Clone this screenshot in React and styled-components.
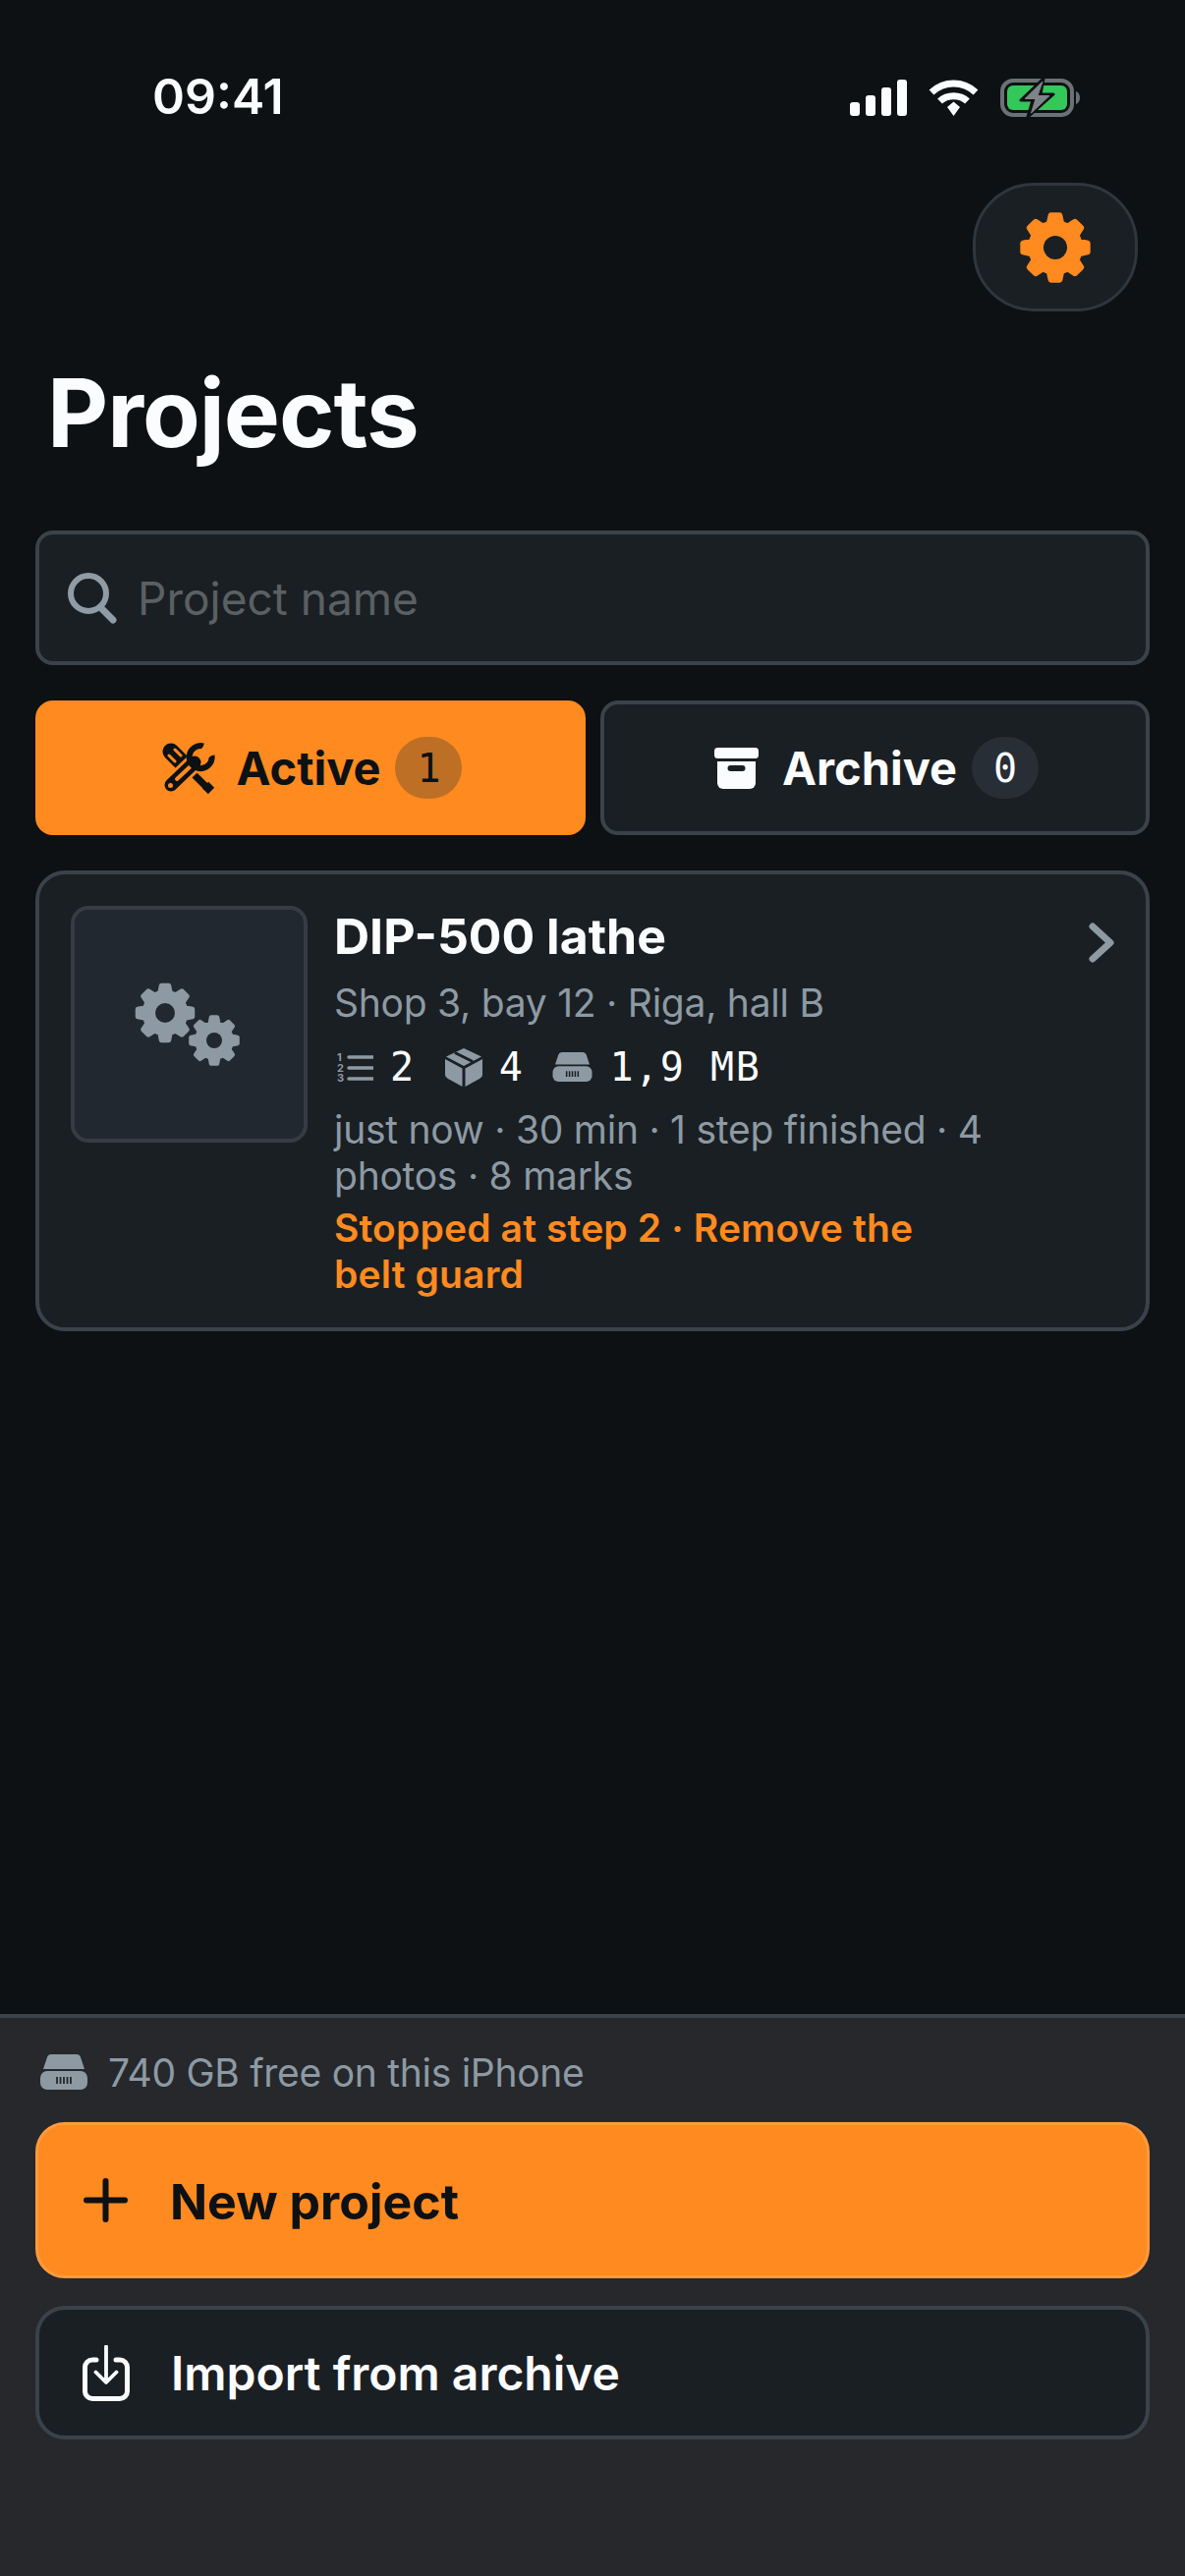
import React from 'react';
import styled, { createGlobalStyle } from 'styled-components';

const ORANGE = '#ff8a1f';
const INK = '#0d1114';
const PANEL = '#1a1f23';
const LINE = '#3a424b';
const MUTED = '#8d9aa4';
const WHITE = '#fbfcfe';
const MONO = '"DejaVu Sans Mono", "Liberation Mono", monospace';

const GlobalStyle = createGlobalStyle`
  html, body { margin: 0; padding: 0; background: ${INK}; }
  * { box-sizing: border-box; }
  body { font-family: Inter, "Noto Sans", sans-serif; }
`;

const Screen = styled.div`
  width: 1206px;
  height: 2622px;
  display: flex;
  flex-direction: column;
  background: ${INK};
  overflow: hidden;
`;

const StatusBar = styled.div`
  height: 186px;
  flex: none;
  display: flex;
  justify-content: space-between;
  align-items: flex-start;
  padding: 67px 106px 0 155px;
`;

const Clock = styled.span`
  color: ${WHITE};
  font-size: 50px;
  line-height: 62px;
  font-weight: 600;
`;

const StatusIcons = styled.div`
  display: flex;
  align-items: center;
  gap: 22px;
  padding-top: 11px;
`;

const Header = styled.div`
  display: flex;
  justify-content: flex-end;
  padding: 0 48px;
`;

const RoundButton = styled.button`
  width: 168px;
  height: 131px;
  border-radius: 62px;
  border: 3px solid #2f363d;
  background: ${PANEL};
  display: flex;
  align-items: center;
  justify-content: center;
  padding: 0;
`;

const Title = styled.h1`
  margin: 0;
  height: 223px;
  padding: 42px 0 0 48px;
  color: ${WHITE};
  font-size: 96px;
  line-height: 122px;
  font-weight: 700;
  letter-spacing: -1px;
`;

const Content = styled.main`
  flex: 1;
  padding: 0 36px;
  display: flex;
  flex-direction: column;
`;

const SearchBox = styled.label`
  height: 137px;
  display: flex;
  align-items: center;
  gap: 21px;
  padding: 0 29px;
  background: ${PANEL};
  border: 4px solid ${LINE};
  border-radius: 18px;
`;

const SearchInput = styled.input`
  flex: 1;
  height: 100%;
  border: 0;
  outline: 0;
  padding: 0;
  background: transparent;
  color: ${WHITE};
  font: 400 46px Inter, sans-serif;
  &::placeholder { color: #5b6063; opacity: 1; }
`;

const Tabs = styled.div`
  display: grid;
  grid-template-columns: 560px 559px;
  gap: 15px;
  margin-top: 36px;
`;

const Tab = styled.button`
  height: 137px;
  display: flex;
  align-items: center;
  justify-content: center;
  padding: 0 0 0 3px;
  border-radius: 18px;
  border: 4px solid ${(p) => (p.$active ? ORANGE : LINE)};
  background: ${(p) => (p.$active ? ORANGE : PANEL)};
  color: ${(p) => (p.$active ? INK : WHITE)};
`;

const TabLabel = styled.span`
  margin-left: ${(p) => p.$gap}px;
  font: 700 47px/60px Inter, sans-serif;
`;

const Badge = styled.span`
  width: 68px;
  height: 63px;
  margin-left: 15px;
  border-radius: 32px;
  display: flex;
  align-items: center;
  justify-content: center;
  background: ${(p) => (p.$active ? '#bd6f25' : '#282e35')};
  font: 400 40px/1 ${MONO};
`;

const Card = styled.article`
  margin-top: 36px;
  height: 469px;
  display: flex;
  align-items: flex-start;
  padding: 32px;
  background: ${PANEL};
  border: 4px solid ${LINE};
  border-radius: 30px;
`;

const Thumb = styled.div`
  width: 241px;
  height: 241px;
  flex: none;
  display: flex;
  align-items: center;
  justify-content: center;
  background: #22282f;
  border: 4px solid #353c44;
  border-radius: 18px;
`;

const CardBody = styled.div`
  width: 665px;
  margin-left: 27px;
`;

const CardTitle = styled.h2`
  margin: 0;
  color: ${WHITE};
  font-size: 50px;
  line-height: 62px;
  font-weight: 700;
`;

const Location = styled.p`
  margin: 13px 0 0;
  color: ${MUTED};
  font-size: 39px;
  line-height: 47px;
  letter-spacing: -0.25px;
`;

const Stats = styled.div`
  height: 42px;
  margin-top: 21px;
  display: flex;
  align-items: center;
  padding-left: 3px;
`;

const StatValue = styled.span`
  margin-left: 17px;
  margin-right: ${(p) => p.$after || 0}px;
  color: ${WHITE};
  font: 400 40px/46px ${MONO};
  letter-spacing: 1.6px;
  white-space: pre;
`;

const Meta = styled.p`
  margin: 19px 0 0;
  color: ${MUTED};
  font-size: 39px;
  line-height: 47px;
  letter-spacing: -0.25px;
`;

const Resume = styled.p`
  margin: 6px 0 0;
  color: ${ORANGE};
  font-size: 39px;
  line-height: 47px;
  font-weight: 600;
  letter-spacing: 0.15px;
`;

const Chevron = styled.svg`
  margin: 17px 0 0 auto;
  flex: none;
`;

const Footer = styled.footer`
  height: 572px;
  flex: none;
  padding: 37px 36px 0;
  background: #26282b;
  border-top: 4px solid ${LINE};
`;

const Storage = styled.div`
  height: 36px;
  display: flex;
  align-items: center;
  gap: 21px;
  padding-left: 5px;
  color: ${MUTED};
  font-size: 39px;
  letter-spacing: -0.28px;
`;

const ActionButton = styled.button`
  width: 100%;
  height: ${(p) => (p.$primary ? 159 : 136)}px;
  margin-top: ${(p) => (p.$primary ? 33 : 28)}px;
  display: flex;
  align-items: center;
  gap: ${(p) => (p.$primary ? 43 : 42)}px;
  padding: 0 0 0 ${(p) => (p.$primary ? 46 : 44)}px;
  border-radius: 30px;
  border: ${(p) => (p.$primary ? '3px solid #ff9a3d' : `4px solid ${LINE}`)};
  background: ${(p) => (p.$primary ? ORANGE : PANEL)};
  color: ${(p) => (p.$primary ? INK : WHITE)};
  font: ${(p) => (p.$primary ? '700 50px/62px' : '600 48px/62px')} Inter, sans-serif;
`;

const ActionLabel = styled.span`
  padding-top: 2px;
`;

function gearPath(cx, cy, outer, root, teeth = 8) {
  const step = (Math.PI * 2) / teeth;
  const pts = [];
  for (let i = 0; i < teeth; i += 1) {
    const a = -Math.PI / 2 + i * step;
    const at = (r, d) => [cx + r * Math.cos(a + d * step), cy + r * Math.sin(a + d * step)];
    pts.push(at(root, -0.32), at(outer, -0.17), at(outer, 0.17), at(root, 0.32));
  }
  return `M${pts.map((p) => p.map((v) => v.toFixed(2)).join(' ')).join('L')}Z`;
}

function Gear({ cx, cy, outer, root, hole, color, holeColor, round }) {
  return (
    <>
      <path d={gearPath(cx, cy, outer, root)} fill={color} stroke={color} strokeWidth={round} strokeLinejoin="round" />
      <circle cx={cx} cy={cy} r={hole} fill={holeColor} />
    </>
  );
}

const SignalIcon = () => (
  <svg width="58" height="37" viewBox="0 0 58 37" fill={WHITE}>
    <rect x="0" y="23" width="10" height="14" rx="3" />
    <rect x="16" y="16" width="10" height="21" rx="3" />
    <rect x="32" y="8" width="10" height="29" rx="3" />
    <rect x="48" y="0" width="10" height="37" rx="3" />
  </svg>
);

const WifiIcon = () => (
  <svg width="51" height="37" viewBox="0 0 51 37" fill="none" stroke={WHITE} strokeWidth="7">
    <path d="M3 13C16 1 35 1 48 13" />
    <path d="M11.5 22C19 15 32 15 39.500 22" />
    <path d="M19 28L25.500 22.500 32 28 25.500 37Z" fill={WHITE} stroke="none" />
  </svg>
);

const BatteryIcon = () => (
  <svg width="82" height="42" viewBox="0 0 82 42" fill="none">
    <rect x="2" y="4" width="71" height="35" rx="11" stroke="#6c7176" strokeWidth="4" />
    <rect x="7" y="9" width="61" height="25" rx="6" fill="#34c759" />
    <path d="M44 2L21 24H33L28 41 54 18H41Z" fill={INK} stroke={INK} strokeWidth="3" strokeLinejoin="round" />
    <path d="M43 5L25 22.500H36L31.500 37 50 19.500H38Z" fill="#7f8489" stroke="#7f8489" strokeWidth="1" strokeLinejoin="round" />
    <path d="M77 15C80 16 81 19 81 21.500S80 27 77 28Z" fill="#6c7176" />
  </svg>
);

const SettingsGear = () => (
  <svg width="74" height="74" viewBox="0 0 74 74">
    <Gear cx={37} cy={37} outer={33} root={25} hole={12} color={ORANGE} holeColor={PANEL} round={6} />
  </svg>
);

const SearchIcon = () => (
  <svg width="50" height="52" viewBox="0 0 50 52" fill="none" stroke="#8f9ca6" strokeLinecap="round">
    <circle cx="21" cy="21" r="18" strokeWidth="6" />
    <path d="M33 35L46 48" strokeWidth="7" />
  </svg>
);

const ToolsIcon = () => (
  <svg width="54" height="52" viewBox="0 0 54 52" fill="none" strokeLinecap="round">
    <path d="M9 9L21 21" stroke={INK} strokeWidth="17" />
    <path d="M7 13L13 19M13 7L19 13" stroke={ORANGE} strokeWidth="3" />
    <path d="M24 24L45 45" stroke={INK} strokeWidth="7" />
    <path d="M44 43L50 49" stroke={INK} strokeWidth="9" strokeLinecap="butt" />
    <path d="M9 43L33 20" stroke={ORANGE} strokeWidth="19" />
    <path d="M9 43L33 20" stroke={INK} strokeWidth="13" />
    <path d="M15 37L30 23" stroke={ORANGE} strokeWidth="4" />
    <circle cx="8.500" cy="43.500" r="2.500" fill={ORANGE} />
    <path d="M42 3.500A11.500 11.500 0 1 0 50.500 13" stroke={INK} strokeWidth="6" strokeLinecap="butt" />
    <path d="M42 3.500L37 10 40 15 46 16 50.500 13" fill={ORANGE} />
  </svg>
);

const ArchiveIcon = () => (
  <svg width="45" height="42" viewBox="0 0 45 42" fill={WHITE}>
    <rect x="0" y="0" width="45" height="11" rx="3.500" />
    <path d="M3 14H42V36A6 6 0 0 1 36 42H9A6 6 0 0 1 3 36Z" />
    <rect x="13.500" y="18" width="18" height="6" rx="3" fill={PANEL} />
  </svg>
);

const ListIcon = () => (
  <svg width="37" height="38" viewBox="0 0 37 38" style={{ flex: 'none' }}>
    <g fill={MUTED} fontFamily="Inter, sans-serif" fontSize="11" fontWeight="700">
      <text x="0" y="13">1</text>
      <text x="0" y="24">2</text>
      <text x="0" y="34">3</text>
    </g>
    <path d="M12 9H37M12 20H37M12 31H37" stroke={MUTED} strokeWidth="3.500" strokeLinecap="round" />
  </svg>
);

const PackageIcon = () => (
  <svg width="38" height="39" viewBox="0 0 38 39" fill={MUTED} style={{ flex: 'none' }}>
    <path d="M19 0L37 8.500 19 18 1 8.500Z" />
    <path d="M10 4.500L28 13.500" stroke={PANEL} strokeWidth="3" />
    <path d="M0 11L17.500 20.500V39L3 31Q0 29.500 0 27Z" />
    <path d="M38 11L20.500 20.500V39L35 31Q38 29.500 38 27Z" />
  </svg>
);

const DriveIcon = ({ width, height, slot }) => (
  <svg width={width} height={height} viewBox="0 0 48 36" fill={MUTED} style={{ flex: 'none' }}>
    <path d="M11 0H37Q40 0 41 3L45 15H3L7 3Q8 0 11 0Z" />
    <rect x="0" y="17" width="48" height="19" rx="7" />
    <path d="M17 23V30M20.500 23V30M24 23V30M27.500 23V30M31 23V30" stroke={slot} strokeWidth="1.800" />
  </svg>
);

const GearsIcon = () => (
  <svg width="108" height="86" viewBox="0 0 108 86" style={{ marginLeft: -3 }}>
    <Gear cx={31} cy={31} outer={28} root={21} hole={10} color={MUTED} holeColor="#22282f" round={5} />
    <Gear cx={81} cy={59} outer={24} root={18} hole={8} color={MUTED} holeColor="#22282f" round={4} />
  </svg>
);

const PlusIcon = () => (
  <svg width="45" height="45" viewBox="0 0 45 45" stroke={INK} strokeWidth="6" strokeLinecap="round" style={{ flex: 'none' }}>
    <path d="M22.500 3V42M3 22.500H42" />
  </svg>
);

const ImportIcon = () => (
  <svg width="48" height="57" viewBox="0 0 48 57" fill="none" stroke={WHITE} strokeLinecap="round" strokeLinejoin="round" style={{ flex: 'none' }}>
    <path d="M14 15H10A7.500 7.500 0 0 0 2.500 22.500V47A7.500 7.500 0 0 0 10 54.500H38A7.500 7.500 0 0 0 45.500 47V22.500A7.500 7.500 0 0 0 38 15H34" strokeWidth="5" />
    <path d="M24 1.500V37M13.500 27.500L24 38 34.500 27.500" strokeWidth="3.800" />
  </svg>
);

export default function App() {
  return (
    <Screen>
      <GlobalStyle />
      <StatusBar>
        <Clock>09:41</Clock>
        <StatusIcons>
          <SignalIcon />
          <WifiIcon />
          <BatteryIcon />
        </StatusIcons>
      </StatusBar>
      <Header>
        <RoundButton aria-label="Settings">
          <SettingsGear />
        </RoundButton>
      </Header>
      <Title>Projects</Title>
      <Content>
        <SearchBox>
          <SearchIcon />
          <SearchInput placeholder="Project name" />
        </SearchBox>
        <Tabs>
          <Tab $active>
            <ToolsIcon />
            <TabLabel $gap={22}>Active</TabLabel>
            <Badge $active>1</Badge>
          </Tab>
          <Tab>
            <ArchiveIcon />
            <TabLabel $gap={24}>Archive</TabLabel>
            <Badge>0</Badge>
          </Tab>
        </Tabs>
        <Card>
          <Thumb>
            <GearsIcon />
          </Thumb>
          <CardBody>
            <CardTitle>DIP-500 lathe</CardTitle>
            <Location>Shop 3, bay 12 · Riga, hall B</Location>
            <Stats>
              <ListIcon />
              <StatValue $after={30}>2</StatValue>
              <PackageIcon />
              <StatValue $after={29}>4</StatValue>
              <DriveIcon width={41} height={30} slot={PANEL} />
              <StatValue>1,9 MB</StatValue>
            </Stats>
            <Meta>just now · 30 min · 1 step finished · 4 photos · 8 marks</Meta>
            <Resume>Stopped at step 2 · Remove the belt guard</Resume>
          </CardBody>
          <Chevron width="26" height="41" viewBox="0 0 26 41" fill="none" stroke={MUTED} strokeWidth="7" strokeLinecap="round" strokeLinejoin="round">
            <path d="M4 4L22 20.500 4 37" />
          </Chevron>
        </Card>
      </Content>
      <Footer>
        <Storage>
          <DriveIcon width={48} height={36} slot="#26282b" />
          740 GB free on this iPhone
        </Storage>
        <ActionButton $primary>
          <PlusIcon />
          <ActionLabel>New project</ActionLabel>
        </ActionButton>
        <ActionButton>
          <ImportIcon />
          <ActionLabel>Import from archive</ActionLabel>
        </ActionButton>
      </Footer>
    </Screen>
  );
}
